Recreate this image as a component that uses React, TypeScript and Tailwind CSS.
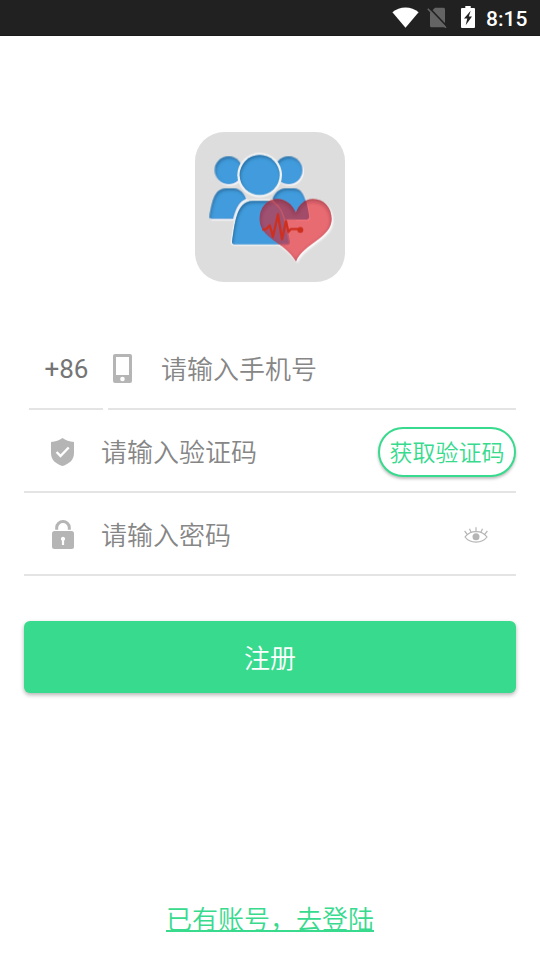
import React, { useState } from 'react';

const StatusBar: React.FC = () => (
  <header className="flex h-9 shrink-0 items-center border-b border-[#1a1a1a] bg-[#212121] pr-3 pl-[392px] text-white">
    {/* Wi-Fi */}
    <svg className="mb-px h-[21px] w-[27px]" viewBox="0 0 27 21" fill="currentColor">
      <path d="M.4 5.200C4 2 8.600 .4 13.500 .4S23 2 26.600 5.200L13.500 20.800Z" />
    </svg>
    {/* No SIM */}
    <svg className="ml-[8px] h-[21px] w-5" viewBox="0 0 20 21">
      <path d="M8 .8h8.500A1.500 1.500 0 0 1 18 2.300v17.900H4.500A1.500 1.500 0 0 1 3 18.700V5.800Z" fill="#646464" />
      <path d="M2 .6 20.200 19.600" stroke="#212121" strokeWidth="1.600" />
      <path d="M.8 1.800 19 20.800" stroke="#646464" strokeWidth="1.600" />
    </svg>
    {/* Battery */}
    <svg className="mb-px ml-[14px] h-[22px] w-[14px]" viewBox="0 0 14 22">
      <path d="M4.300 0h5.400v2H13a1 1 0 0 1 1 1v18a1 1 0 0 1-1 1H1a1 1 0 0 1-1-1V3a1 1 0 0 1 1-1h3.300Z" fill="currentColor" />
      <path d="M9.700 4.700 3 12.500h3.300L4.700 19.300 11 10.500H7.800Z" fill="#212121" />
    </svg>
    <span className="ml-[11px] pt-[3px] font-['Roboto',sans-serif] text-[21px] leading-none font-medium whitespace-nowrap">8:15</span>
  </header>
);

const HEART =
  'M318 258C307 232 286 216 262 216c-31 0-53 27-53 60 0 58 75 69 109 127 24-55 107-70 107-127 0-34-23-60-56-60-24 0-43 17-51 42Z';
const FRONT_BODY = 'M126 345C134 300 136 222 188 222h44c51 0 54 74 66 122q1 8-7 8H134q-8 0-8-7Z';
const RIGHT_BODY = 'M248 216c4-14 18-32 39-32h25c33 0 39 46 45 83q1 10-8 10h-64Z';

const Logo: React.FC = () => (
  <svg className="size-[150px]" viewBox="15 15 450 450">
    <defs>
      <filter id="inset" x="-10%" y="-10%" width="120%" height="120%">
        <feGaussianBlur in="SourceAlpha" stdDeviation="5" result="blur" />
        <feOffset in="blur" dx="2" dy="7" result="shifted" />
        <feComposite in="SourceAlpha" in2="shifted" operator="out" result="edge" />
        <feFlood floodColor="#17527f" floodOpacity="0.7" />
        <feComposite in2="edge" operator="in" result="shade" />
        <feMerge>
          <feMergeNode in="SourceGraphic" />
          <feMergeNode in="shade" />
        </feMerge>
      </filter>
      <filter id="heart-inset" x="-10%" y="-10%" width="120%" height="120%">
        <feGaussianBlur in="SourceAlpha" stdDeviation="6" result="blur" />
        <feOffset in="blur" dx="1" dy="7" result="shifted" />
        <feComposite in="SourceAlpha" in2="shifted" operator="out" result="edge" />
        <feFlood floodColor="#701c2c" floodOpacity="0.5" />
        <feComposite in2="edge" operator="in" />
      </filter>
      <filter id="glow" x="-10%" y="-10%" width="125%" height="125%">
        <feDropShadow dx="3" dy="4" stdDeviation="2" floodColor="#fff" floodOpacity="0.9" />
      </filter>
      <filter id="soft">
        <feGaussianBlur stdDeviation="3" />
      </filter>
      <clipPath id="heart">
        <path d={HEART} />
      </clipPath>
    </defs>
    <rect x="15" y="15" width="450" height="450" rx="88" fill="#ddd" />
    <path d={HEART} fill="#fff" filter="url(#soft)" transform="translate(4 5)" />
    <path d={HEART} fill="#ddd" />
    <g filter="url(#glow)">
      <g fill="#439bdc" filter="url(#inset)">
        <circle cx="116" cy="130" r="42" />
        <path d="M58 269C65 235 69 184 108 184h23c21 0 34 18 38 32-21 7-32 31-39 60H66q-8 0-8-7Z" />
      </g>
      <g fill="#439bdc" filter="url(#inset)">
        <circle cx="296" cy="130" r="42" />
        <path d={RIGHT_BODY} />
      </g>
    </g>
    <path d="M318 258 285 214 232 222 303 350 318 345Z" fill="#ddd" clipPath="url(#heart)" />
    <circle cx="209" cy="144" r="67" fill="#f1f1f1" />
    <path
      d="M126 345C134 300 136 220 188 220h44c51 0 54 75 66 124q1 8-7 8H134q-8 0-8-7Z"
      fill="none"
      stroke="#eee"
      strokeWidth="9"
    />
    <g fill="#439bdc" filter="url(#inset)">
      <circle cx="209" cy="144" r="60" />
      <path d={FRONT_BODY} />
    </g>
    <path d={HEART} fill="#ee2a35" fillOpacity="0.640" />
    <g clipPath="url(#heart)">
      <path d={RIGHT_BODY} fill="#a24c69" />
      <path d={FRONT_BODY} fill="#9f5172" stroke="#c0576a" strokeWidth="5" />
    </g>
    <path d={HEART} filter="url(#heart-inset)" />
    <path
      d="m217 308 12-2 10-11 10 34 15-67 12 75 12-55 7 33 8-9h24"
      fill="none"
      stroke="#ce3020"
      strokeWidth="7"
      strokeLinejoin="round"
    />
    <circle cx="331" cy="309" r="9" fill="#ce3020" />
  </svg>
);

const PhoneIcon: React.FC = () => (
  <svg className="h-[29px] w-[19px] shrink-0" viewBox="0 0 19 29">
    <rect width="19" height="29" rx="2" fill="#b5b5b5" />
    <path d="M3 3h13v18H3Z" fill="#fff" />
    <circle cx="9.500" cy="25" r="2.300" fill="#fff" />
  </svg>
);

const ShieldIcon: React.FC = () => (
  <svg className="h-7 w-[23px] shrink-0" viewBox="0 0 23 28">
    <path d="M11.500 0C8.500 2.300 4.500 3.700 0 4v11c0 7 5 11 11.500 13C18 26 23 22 23 15V4c-4.500-.3-8.500-1.700-11.500-4Z" fill="#b5b5b5" />
    <path d="m5.600 14 3.900 4 8.200-8.500" fill="none" stroke="#fff" strokeWidth="2.400" />
  </svg>
);

const LockIcon: React.FC = () => (
  <svg className="h-[29px] w-[22px] shrink-0" viewBox="0 0 22 29">
    <path d="M4.700 9.800V7.500a6.300 5.900 0 0 1 12.600 0v2.300" fill="none" stroke="#b5b5b5" strokeWidth="3" />
    <rect y="11" width="22" height="18" rx="2.500" fill="#b5b5b5" />
    <path d="M11 16.800a2.100 2.100 0 0 1 1.100 3.900V25H9.900v-4.300A2.100 2.100 0 0 1 11 16.800Z" fill="#fff" />
  </svg>
);

const EyeIcon: React.FC = () => (
  <svg className="h-4 w-6" viewBox="0 0 24 16" fill="none" stroke="#b5b5b5" strokeWidth="1.200">
    <path d="M1 10C6 2.800 18 2.800 23 10 18 16.700 6 16.700 1 10Z" />
    <path d="M3.300 7.300.6 4M7.100 5.200 5.500 1.700M12 4.300V.3M16.900 5.200l1.600-3.500M20.700 7.300 23.400 4" />
    <circle cx="12" cy="9.700" r="3.500" fill="#b5b5b5" stroke="none" />
  </svg>
);

const inputClass =
  'min-w-0 bg-transparent pb-0.5 text-[26px] leading-9 text-[#555] outline-none placeholder:text-[#868686] placeholder:opacity-100';

export default function App() {
  const [phone, setPhone] = useState('');
  const [code, setCode] = useState('');
  const [password, setPassword] = useState('');
  const [visible, setVisible] = useState(false);

  return (
    <div className="flex h-[960px] w-[540px] flex-col overflow-hidden bg-white font-['Noto_Sans_CJK_SC',sans-serif] font-[350]">
      <StatusBar />

      <main className="flex flex-1 flex-col px-6">
        <div className="flex justify-center pt-24 pb-[45px]">
          <Logo />
        </div>

        {/* Phone number */}
        <div className="flex h-[83px] pl-[5px]">
          <div className="mr-[5px] flex w-[74px] items-center justify-center border-b-2 border-[#e4e4e4] pt-[3px] pl-px font-['Roboto',sans-serif] text-[26px] font-normal text-[#757575]">
            +86
          </div>
          <div className="flex flex-1 items-center border-b-2 border-[#e4e4e4] pt-0.5 pl-[5px]">
            <PhoneIcon />
            <input
              className={`ml-[29px] flex-1 ${inputClass}`}
              value={phone}
              onChange={(e) => setPhone(e.target.value)}
              placeholder="请输入手机号"
            />
          </div>
        </div>

        {/* Verification code */}
        <div className="flex h-[83px] items-center border-b-2 border-[#e4e4e4] pt-0.5 pl-[27px]">
          <ShieldIcon />
          <input
            className={`ml-[27px] flex-1 ${inputClass}`}
            value={code}
            onChange={(e) => setCode(e.target.value)}
            placeholder="请输入验证码"
          />
          <button className="h-[50px] w-[138px] shrink-0 rounded-full border-2 border-[#38da8e] bg-white text-[23px] leading-none whitespace-nowrap text-[#38da8e] shadow-[0_2px_3px_rgba(0,0,0,0.25)]">
            获取验证码
          </button>
        </div>

        {/* Password */}
        <div className="flex h-[83px] items-center border-b-2 border-[#e4e4e4] pt-0.5 pr-7 pl-7">
          <LockIcon />
          <input
            className={`ml-[27px] flex-1 ${inputClass}`}
            type={visible ? 'text' : 'password'}
            value={password}
            onChange={(e) => setPassword(e.target.value)}
            placeholder="请输入密码"
          />
          <button onClick={() => setVisible(!visible)}>
            <EyeIcon />
          </button>
        </div>

        <button className="mt-[45px] h-[72px] shrink-0 rounded-[6px] bg-[#38da8e] pb-0.5 text-[26px] text-white shadow-[0_2px_4px_rgba(0,0,0,0.3)]">
          注册
        </button>

        <a
          href="#login"
          className="mt-auto mb-[28px] h-7 self-center border-b-2 border-[#38da8e] text-[26px] leading-7 text-[#38da8e]"
        >
          已有账号，去登陆
        </a>
      </main>
    </div>
  );
}
